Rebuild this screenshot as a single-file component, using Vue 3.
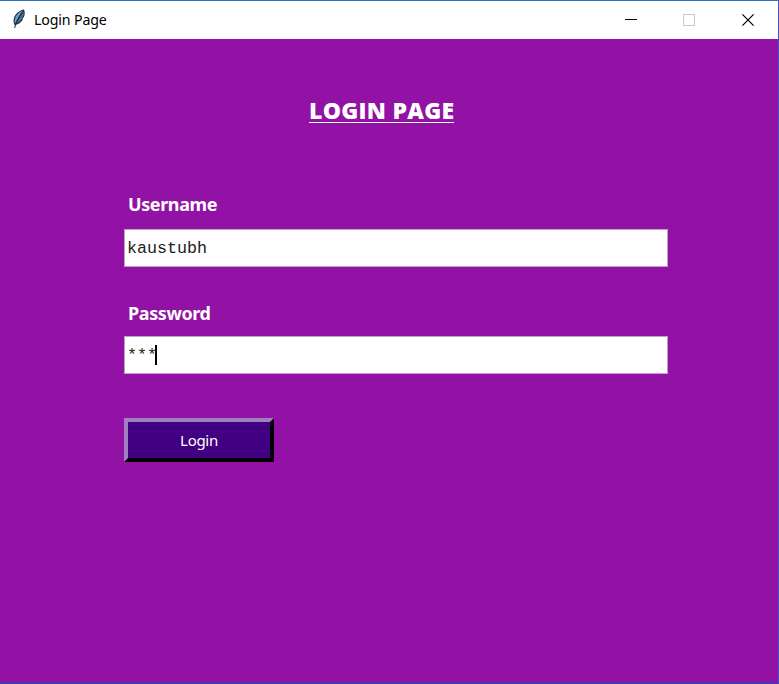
<script setup>
import { ref } from 'vue'

const username = ref('kaustubh')
const mask = ref('***')
</script>

<template>
  <div class="window">
    <header class="titlebar">
      <svg class="feather" width="14" height="20" viewBox="0 0 14 20">
        <path d="M12 0.4C8.4 0.8 3 4.4 1.8 9.4C1.2 12 1.6 14.6 2.8 16.2C6.4 15.6 10 12.8 11 10L10.3 9.6L11.9 8.2C13 5.6 13 2.6 12 0.4Z" fill="#26323f" />
        <path d="M10.8 1.6C7.2 3 3.8 6.4 2.9 10.2C2.5 11.8 2.6 13.4 3.2 14.6C5.2 10.2 8 5.6 10.8 1.6Z" fill="#6f9fd0" />
        <path d="M11.5 2.4C8.8 6 6.2 10.4 4.6 14.6C7.2 13.4 9.2 11.4 10 9L11 7.4C11.8 5.6 11.9 4 11.5 2.4Z" fill="#45709e" />
        <path d="M10.8 3C7.2 7.4 4 12.8 2.6 19" fill="none" stroke="#1d2731" stroke-width="1" />
      </svg>
      <span class="caption">Login Page</span>
      <div class="controls">
        <svg width="12" height="12" viewBox="0 0 12 12"><path d="M0 5.5H12" stroke="#000" /></svg>
        <svg width="12" height="12" viewBox="0 0 12 12"><rect x="0.5" y="0.5" width="11" height="11" fill="none" stroke="#c8c8c8" /></svg>
        <svg class="close" width="12" height="12" viewBox="0 0 12 12"><path d="M0.4 0.4L11.6 11.6M11.6 0.4L0.4 11.6" stroke="#000" stroke-width="1.2" /></svg>
      </div>
    </header>
    <main class="content">
      <h1 class="heading"><span class="underlined">LOGIN PAGE</span></h1>
      <div class="form">
        <div class="label user">Username</div>
        <div class="entry first"><span class="value">{{ username }}</span></div>
        <div class="label pass">Password</div>
        <div class="entry second"><span class="value">{{ mask }}</span><span class="caret"></span></div>
        <button class="login">Login</button>
      </div>
    </main>
  </div>
</template>

<style>
body {
  margin: 0;
}
</style>

<style scoped>
.window {
  box-sizing: border-box;
  width: 779px;
  height: 684px;
  display: flex;
  flex-direction: column;
  background: #9112a5;
  border-top: 1px solid #2a74bd;
  border-right: 1px solid #4a4fc4;
  border-bottom: 2px solid #4a35b5;
  font-family: "Open Sans", "Noto Sans", sans-serif;
}
.titlebar {
  height: 38px;
  flex: none;
  display: flex;
  align-items: center;
  background: #fff;
  padding-left: 12px;
}
.feather {
  margin: 0 8px 2px 0;
}
.caption {
  font-family: "Noto Sans", sans-serif;
  font-size: 14.2px;
  letter-spacing: -0.15px;
  padding-bottom: 2px;
  color: #000;
}
.controls {
  margin-left: auto;
  margin-right: 24px;
  display: flex;
  gap: 46px;
}
.close {
  margin-left: 1px;
}
.content {
  display: flex;
  flex-direction: column;
}
.heading {
  margin: 56px 0 0 309px;
  height: 30px;
  line-height: 30px;
  font-size: 23px;
  font-weight: 800;
  letter-spacing: 0.25px;
  color: #fff;
  white-space: nowrap;
}
.underlined {
  display: inline-block;
  height: 27px;
  line-height: 30px;
  border-bottom: 1px solid #fff;
}
.form {
  width: 544px;
  margin: 67px 0 0 124px;
  display: flex;
  flex-direction: column;
}
.label {
  height: 24px;
  line-height: 24px;
  padding-left: 4px;
  font-family: "Noto Sans", sans-serif;
  font-size: 18px;
  font-weight: 700;
  letter-spacing: -0.4px;
  color: #fff;
}
.entry {
  box-sizing: border-box;
  display: flex;
  align-items: center;
  background: #fff;
  border: 1px solid #b9a3bd;
  padding-left: 2px;
}
.first {
  height: 38px;
  margin-top: 13px;
}
.pass {
  margin-top: 34px;
}
.second {
  height: 38px;
  margin-top: 11px;
}
.value {
  font-family: "Liberation Mono", monospace;
  font-size: 16.67px;
  color: #222;
}
.caret {
  width: 2px;
  height: 20px;
  background: #000;
  margin-left: -2px;
}
.login {
  box-sizing: border-box;
  width: 150px;
  height: 44px;
  margin-top: 44px;
  padding: 0;
  border-style: solid;
  border-width: 4px;
  border-color: #a080c0 #000 #000 #a080c0;
  background: #410082;
  color: #fff;
  font-family: "Noto Sans", sans-serif;
  font-size: 15px;
  letter-spacing: -0.3px;
}
</style>
